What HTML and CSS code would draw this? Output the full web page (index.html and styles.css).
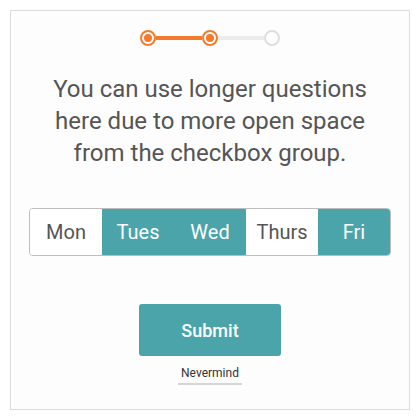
FILE: index.html
```html
<!DOCTYPE html>
<html lang="en">
<head>
    <meta charset="UTF-8">
    <meta name="viewport" content="width=device-width, initial-scale=1.0">
    <title>Question</title>
    <link rel="stylesheet" href="styles.css">
</head>
<body>
    <div class="frame">
        <div class="stepper">
            <span class="step done"></span>
            <span class="bar done"></span>
            <span class="step done"></span>
            <span class="bar"></span>
            <span class="step"></span>
        </div>

        <p class="question">You can use longer questions here due to more open space from the checkbox group.</p>

        <div class="days">
            <button class="day">Mon</button>
            <button class="day on">Tues</button>
            <button class="day on">Wed</button>
            <button class="day">Thurs</button>
            <button class="day on">Fri</button>
        </div>

        <button class="submit">Submit</button>
        <a class="nevermind" href="#">Nevermind</a>
    </div>
</body>
</html>
```

FILE: styles.css
```css
:root {
    --orange: #f57b2c;
    --teal: #4aa4aa;
    --text-color: #555;
    --line: #ececec;
}

body {
    margin: 0;
    padding: 10px;
    font-family: Roboto, "Liberation Sans", sans-serif;
    background: #fff;
}

.frame {
    width: 400px;
    height: 400px;
    box-sizing: border-box;
    border: 1px solid #dcdcdc;
    background: #fdfdfd;
    display: flex;
    flex-direction: column;
    align-items: center;
    padding-top: 19px;
}

.stepper {
    display: flex;
    align-items: center;
}

.step {
    width: 16px;
    height: 16px;
    box-sizing: border-box;
    border-radius: 50%;
    border: 2px solid #dedede;
    background: #fff;
    position: relative;
}

.step.done {
    border-color: var(--orange);
}

.step.done::after {
    content: "";
    position: absolute;
    left: 2px;
    top: 2px;
    width: 8px;
    height: 8px;
    border-radius: 50%;
    background: var(--orange);
}

.bar {
    width: 46px;
    height: 4px;
    background: var(--line);
}

.bar.done {
    background: var(--orange);
}

.question {
    margin: 27px 0 0;
    width: 350px;
    text-align: center;
    font-size: 24px;
    line-height: 32px;
    color: var(--text-color);
}

.days {
    display: flex;
    margin-top: 39px;
    border: 1px solid #bdbdbd;
    border-radius: 4px;
    overflow: hidden;
}

.day {
    width: 72px;
    height: 46px;
    border: none;
    background: #fff;
    font-family: inherit;
    font-size: 20px;
    color: var(--text-color);
    padding: 0;
}

.day.on {
    background: var(--teal);
    color: #fff;
}

.submit {
    margin-top: 48px;
    width: 142px;
    height: 52px;
    border: none;
    border-radius: 3px;
    background: var(--teal);
    color: #fff;
    font-family: inherit;
    font-size: 18px;
    font-weight: 500;
}

.nevermind {
    margin-top: 10px;
    font-size: 12px;
    color: #333;
    text-decoration: none;
    padding: 0 3px 3px;
    border-bottom: 2px solid #d6d6d6;
    line-height: 14px;
}
```
